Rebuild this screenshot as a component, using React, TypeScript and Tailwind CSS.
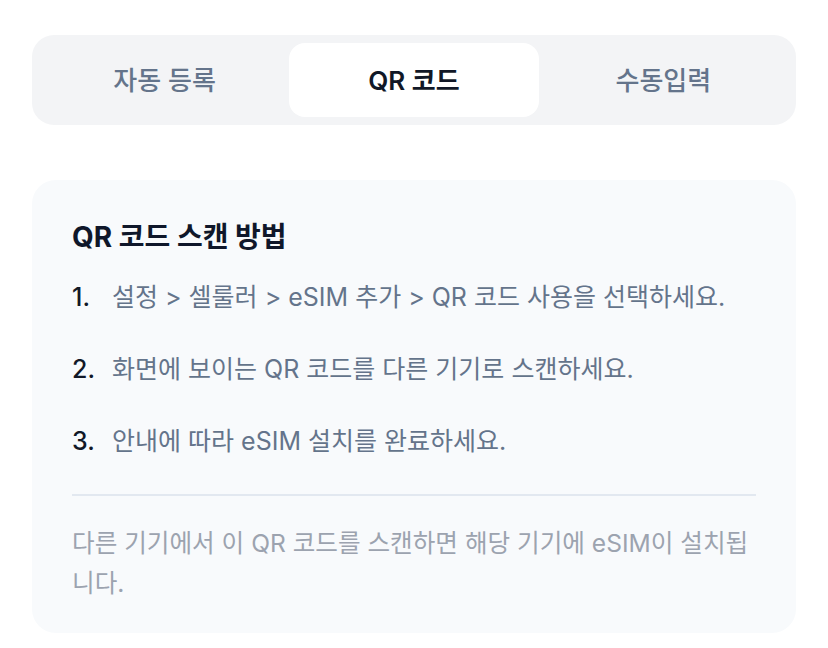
import React, { useState } from 'react';

const tabs = ['자동 등록', 'QR 코드', '수동입력'];

const steps = [
  '설정 > 셀룰러 > eSIM 추가 > QR 코드 사용을 선택하세요.',
  '화면에 보이는 QR 코드를 다른 기기로 스캔하세요.',
  '안내에 따라 eSIM 설치를 완료하세요.',
];

export default function App() {
  const [active, setActive] = useState(1);

  return (
    <div
      className="min-h-[648px] bg-white px-8 pt-[35px]"
      style={{ fontFamily: 'Inter, "Noto Sans CJK KR", sans-serif' }}
    >
      <div className="grid grid-cols-3 rounded-[22px] bg-[#f3f4f6] p-2">
        {tabs.map((t, i) => (
          <button
            key={t}
            onClick={() => setActive(i)}
            className={
              i === active
                ? 'h-[74px] rounded-[16px] bg-white text-[26px] font-semibold text-[#111827]'
                : 'h-[74px] rounded-[16px] text-[26px] font-medium text-[#64748b]'
            }
          >
            {t}
          </button>
        ))}
      </div>

      <div className="mt-[55px] rounded-[24px] bg-[#f8fafc] px-10 pb-[30px] pt-[37px]">
        <h2 className="text-[28px] font-bold leading-[40px] text-[#0f172a]">QR 코드 스캔 방법</h2>
        <ol className="mt-[20px] flex flex-col gap-[32px]">
          {steps.map((s, i) => (
            <li key={i} className="flex text-[25px] leading-[40px]">
              <span className="w-[40px] shrink-0 font-medium text-[#111827]">{i + 1}.</span>
              <span className="text-[#64748b]">{s}</span>
            </li>
          ))}
        </ol>
        <div className="mt-[33px] h-[2px] bg-[#e2e8f0]" />
        <p className="mt-[27px] text-[24.6px] leading-[40px] text-[#9ca3af]">
          다른 기기에서 이 QR 코드를 스캔하면 해당 기기에 eSIM이 설치됩니다.
        </p>
      </div>
    </div>
  );
}
